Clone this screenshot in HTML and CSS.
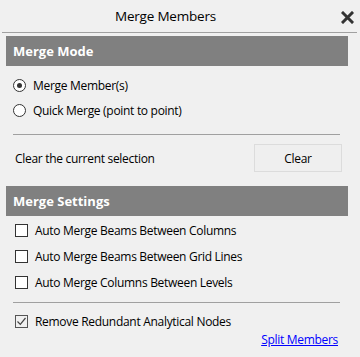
FILE: index.html
```html
<!DOCTYPE html>
<html lang="en">
<head>
<meta charset="UTF-8">
<title>Merge Members</title>
<link rel="stylesheet" href="styles.css">
</head>
<body>

<div class="titlebar">
  <div class="title">Merge Members</div>
  <svg class="close" width="13" height="13" viewBox="0 0 13 13">
    <path d="M2 2 L11 11 M11 2 L2 11" stroke="#333" stroke-width="3" stroke-linecap="square"/>
  </svg>
</div>

<div class="band">Merge Mode</div>

<div class="opts">
  <label class="opt"><span class="radio on"></span>Merge Member(s)</label>
  <label class="opt"><span class="radio"></span>Quick Merge (point to point)</label>
</div>

<div class="sep"></div>

<div class="clear-row">
  <span>Clear the current selection</span>
  <button class="btn">Clear</button>
</div>

<div class="band">Merge Settings</div>

<div class="checks">
  <label class="chk"><span class="box"></span>Auto Merge Beams Between Columns</label>
  <label class="chk"><span class="box"></span>Auto Merge Beams Between Grid Lines</label>
  <label class="chk"><span class="box"></span>Auto Merge Columns Between Levels</label>
</div>

<div class="sep"></div>

<label class="chk last"><span class="box">
  <svg width="11" height="11" viewBox="0 0 11 11"><path d="M1.5 5.5 L4.3 8.3 L9.5 2" fill="none" stroke="#444" stroke-width="1.2"/></svg>
</span>Remove Redundant Analytical Nodes</label>

<div class="links"><a href="#">Split Members</a></div>

</body>
</html>
```

FILE: styles.css
```css
body{
margin:0;
background:#f0f0f0;
font-family:"Open Sans","Noto Sans",sans-serif;
font-size:12px;
letter-spacing:-0.3px;
color:#000;
width:360px;
height:357px;
overflow:hidden;
}

.titlebar{
height:32px;
border-bottom:1px solid #a0a0a0;
margin-left:2px;
margin-right:3px;
display:flex;
align-items:center;
justify-content:center;
position:relative;
}

.title{
font-size:13.5px;
letter-spacing:-0.2px;
margin-left:-28px;
}

.close{
position:absolute;
right:3px;
top:11px;
}

.band{
background:#808080;
color:#fff;
font-weight:bold;
font-size:13px;
letter-spacing:0;
height:30px;
line-height:30px;
margin:3px 12px 0 6px;
padding-left:7px;
}

.opts{
padding:7px 0 0 13px;
}

.opt{
display:flex;
align-items:center;
height:25px;
}

.radio{
width:11px;
height:11px;
border:1px solid #333;
border-radius:50%;
background:#fff;
margin-right:7px;
position:relative;
}

.radio.on:after{
content:"";
position:absolute;
left:3px;
top:3px;
width:5px;
height:5px;
border-radius:50%;
background:#333;
}

.sep{
height:1px;
background:#a0a0a0;
margin:0 20px 0 13px;
}

.opts + .sep{
margin-top:11px;
}

.clear-row{
display:flex;
align-items:center;
justify-content:space-between;
padding:9px 18px 0 15px;
height:28px;
}

.btn{
width:88px;
height:28px;
background:#efefef;
border:1px solid #dcdcdc;
font-family:inherit;
font-size:12px;
letter-spacing:-0.3px;
color:#000;
}

.clear-row + .band{
margin-top:14px;
}

.checks{
padding:1px 0 7px 15px;
}

.chk{
display:flex;
align-items:center;
height:26px;
}

.box{
width:11px;
height:11px;
border:1px solid #333;
background:#fff;
margin-right:7px;
display:flex;
align-items:center;
justify-content:center;
}

.last{
margin:5px 0 0 15px;
}

.last .box{
background:#f0f0f0;
border-color:#555;
}

.links{
text-align:right;
padding-right:22px;
margin-top:-3px;
}

.links a{
color:#0000ff;
}
```
